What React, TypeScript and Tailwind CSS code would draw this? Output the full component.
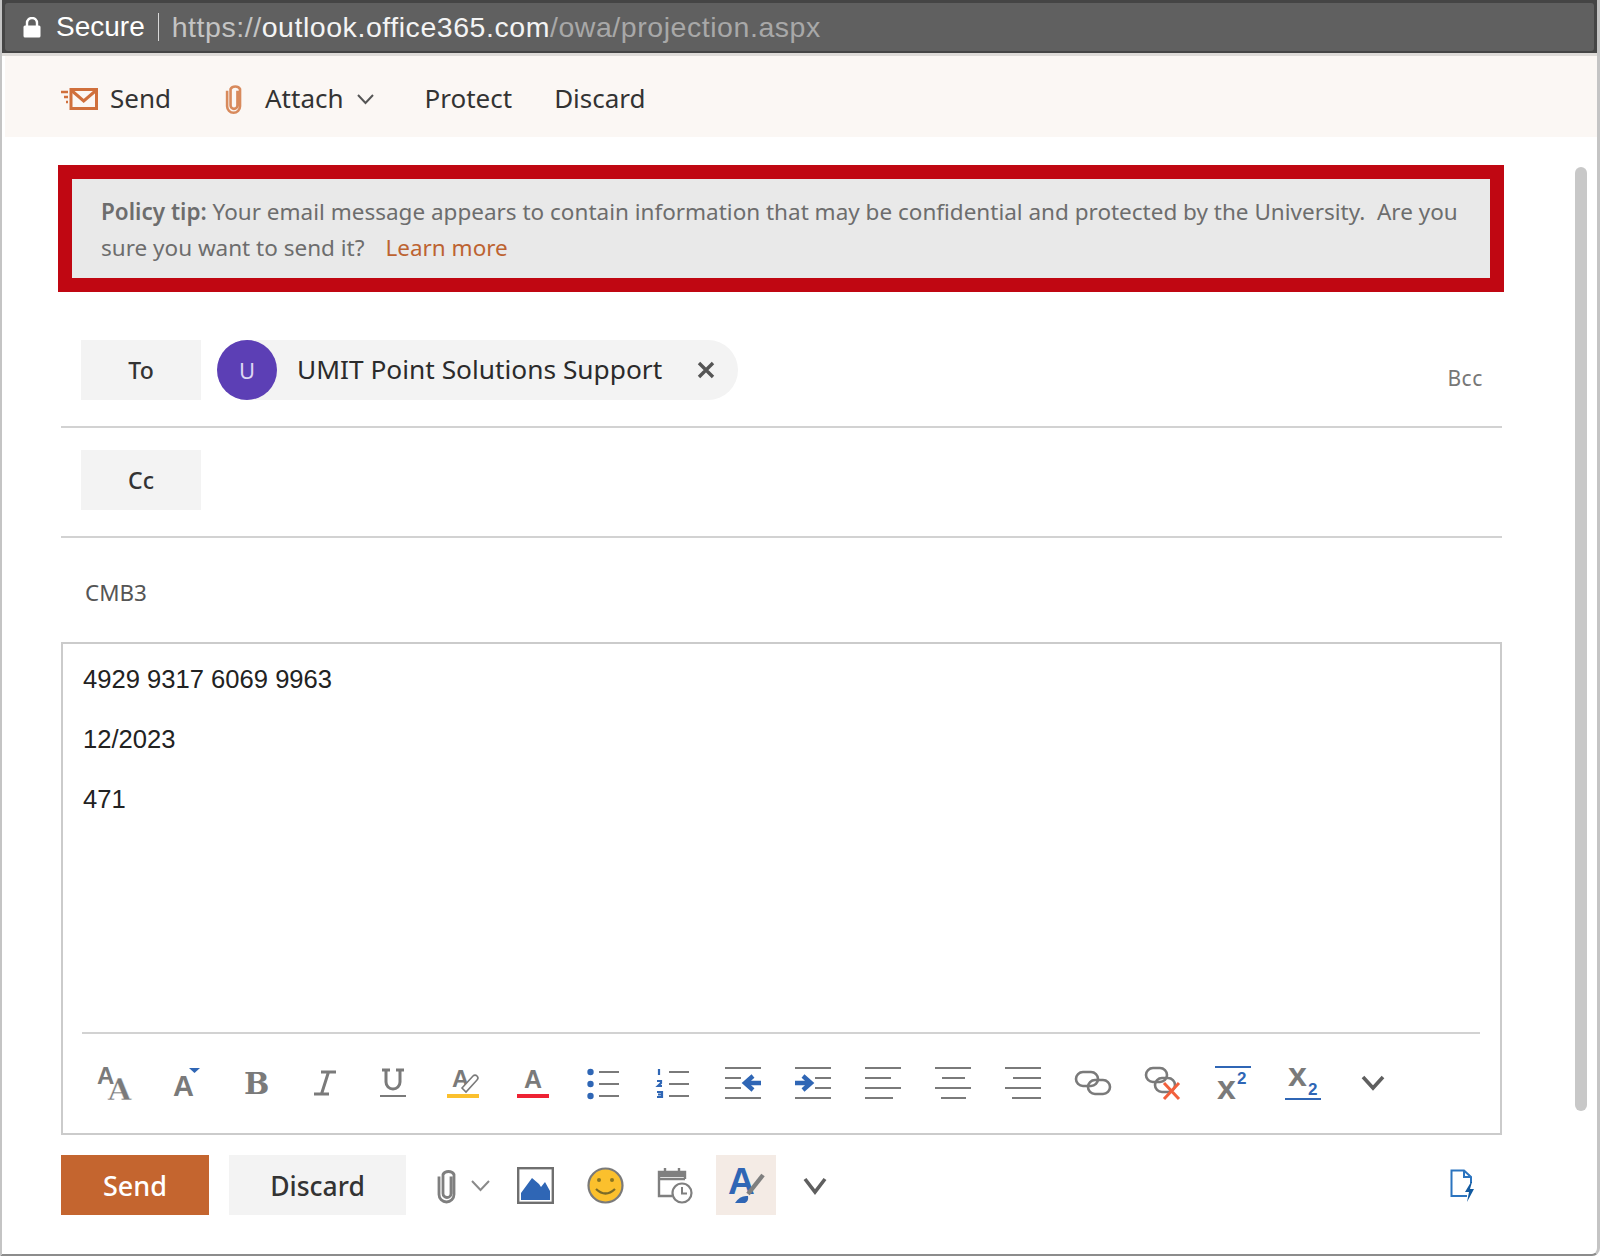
import type { ReactNode } from 'react';

const GRAY = '#7a7a7a';
const BLUE = '#2f66b5';
const SLAB = "'DejaVu Serif', serif";
const SANS = "'Liberation Sans', sans-serif";

function Svg({ w, h, children }: { w: number; h: number; children: ReactNode }) {
  return (
    <svg width={w} height={h} viewBox={`0 0 ${w} ${h}`} fill="none" className="block shrink-0 overflow-visible">
      {children}
    </svg>
  );
}

function Lines({ rows }: { rows: [number, number][] }) {
  const ys = [1, 11, 21, 31];
  return (
    <Svg w={36} h={32}>
      {rows.map(([x1, x2], i) => (
        <line key={i} x1={x1} x2={x2} y1={ys[i]} y2={ys[i]} stroke={GRAY} strokeWidth={2} />
      ))}
    </Svg>
  );
}

function Chevron({ w = 24, h = 15, color = '#5f5f5f', sw = 3.6 }: { w?: number; h?: number; color?: string; sw?: number }) {
  return (
    <Svg w={w} h={h}>
      <path d={`M2 2 L${w / 2} ${h - 2} L${w - 2} 2`} stroke={color} strokeWidth={sw} />
    </Svg>
  );
}

function Clip({ w, h, color, sw }: { w: number; h: number; color: string; sw: number }) {
  return (
    <svg width={w} height={h} viewBox="0 0 20 36" fill="none" className="block shrink-0">
      <path
        d="M14 9 V26 a4 4 0 0 1 -8 0 V7 a6 5 0 0 1 11 0 V27 a7.5 7.5 0 0 1 -15 0 V9"
        stroke={color}
        strokeWidth={sw}
      />
    </svg>
  );
}

const formatIcons: ReactNode[] = [
  <Svg w={38} h={36} key="size">
    <text x={-1} y={19} fontFamily={SANS} fontWeight={700} fontSize={24} fill={GRAY}>A</text>
    <text x={10} y={35} fontFamily={SLAB} fontWeight={700} fontSize={30} fill={GRAY} stroke="#fff" strokeWidth={0.4}>A</text>
  </Svg>,
  <Svg w={28} h={30} key="grow">
    <text x={0} y={28} fontFamily={SANS} fontWeight={700} fontSize={29} fill={GRAY}>A</text>
    <path d="M16 0 H27 L21.5 5 Z" fill={BLUE} />
  </Svg>,
  <Svg w={26} h={26} key="b">
    <text x={0} y={24} fontFamily={SLAB} fontWeight={700} fontSize={30} fill={GRAY}>B</text>
  </Svg>,
  <Svg w={24} h={26} key="i">
    <path d="M8 2 H23 M1 24 H16 M15.5 2 L8.5 24" stroke={GRAY} strokeWidth={3} />
  </Svg>,
  <Svg w={28} h={30} key="u">
    <path d="M3 2 H11 M17 2 H25 M7 2 V14 a7 7 0 0 0 14 0 V2" stroke={GRAY} strokeWidth={3} />
    <line x1={1} x2={27} y1={28} y2={28} stroke={GRAY} strokeWidth={2} />
  </Svg>,
  <Svg w={32} h={32} key="hl">
    <text x={5} y={20} fontFamily={SANS} fontWeight={700} fontSize={24} fill={GRAY}>A</text>
    <path d="M15 21 L26 9 a2.5 2.5 0 0 1 4 4 L19 25 Z" stroke={GRAY} strokeWidth={1.6} fill="#fff" />
    <rect x={0} y={27} width={32} height={4} fill="#fbc02d" />
  </Svg>,
  <Svg w={32} h={32} key="color">
    <text x={7} y={21} fontFamily={SANS} fontWeight={700} fontSize={25} fill={GRAY}>A</text>
    <rect x={0} y={27} width={32} height={4} fill="#ee2233" />
  </Svg>,
  <Svg w={32} h={30} key="bullets">
    {[4, 16, 28].map((y) => (
      <g key={y}>
        <circle cx={3.5} cy={y} r={3.2} fill={BLUE} />
        <line x1={12} x2={32} y1={y} y2={y} stroke={GRAY} strokeWidth={2} />
      </g>
    ))}
  </Svg>,
  <Svg w={33} h={30} key="numbers">
    <path d="M3 1 V7 M1 13 H5 V15 L2 18 H6 M1 24 H6 V29 H1 M2 26.5 H6" stroke={BLUE} strokeWidth={2.2} />
    {[4, 16, 28].map((y) => (
      <line key={y} x1={13} x2={33} y1={y} y2={y} stroke={GRAY} strokeWidth={2} />
    ))}
  </Svg>,
  <Svg w={36} h={32} key="outdent">
    <path d="M0 1 H36 M0 11 H16 M0 21 H16 M0 31 H36" stroke={GRAY} strokeWidth={2} />
    <path d="M36 16 H22 M28 9 L20 16 L28 23" stroke={BLUE} strokeWidth={4.4} />
  </Svg>,
  <Svg w={36} h={32} key="indent">
    <path d="M0 1 H36 M20 11 H36 M20 21 H36 M0 31 H36" stroke={GRAY} strokeWidth={2} />
    <path d="M0 16 H14 M8 9 L16 16 L8 23" stroke={BLUE} strokeWidth={4.4} />
  </Svg>,
  <Lines key="left" rows={[[0, 36], [0, 26], [0, 36], [0, 28]]} />,
  <Lines key="center" rows={[[0, 36], [7, 30], [0, 36], [6, 31]]} />,
  <Lines key="right" rows={[[0, 36], [8, 36], [0, 36], [7, 36]]} />,
  <Svg w={36} h={26} key="link">
    <rect x={1} y={2} width={22} height={14} rx={7} stroke={GRAY} strokeWidth={2.6} />
    <rect x={13} y={10} width={22} height={14} rx={7} stroke={GRAY} strokeWidth={2.6} />
  </Svg>,
  <Svg w={36} h={34} key="unlink">
    <rect x={1} y={2} width={21} height={14} rx={7} stroke={GRAY} strokeWidth={2.6} />
    <rect x={10} y={12} width={20} height={14} rx={7} stroke={GRAY} strokeWidth={2.6} />
    <path d="M19 17 L34 33 M34 17 L19 33" stroke="#f2603c" strokeWidth={3} />
  </Svg>,
  <Svg w={36} h={34} key="sup">
    <line x1={0} x2={36} y1={1} y2={1} stroke={BLUE} strokeWidth={2} />
    <text x={2} y={33} fontFamily={SANS} fontWeight={700} fontSize={34} fill={GRAY}>x</text>
    <text x={22} y={18} fontFamily={SANS} fontWeight={700} fontSize={17} fill={BLUE}>2</text>
  </Svg>,
  <Svg w={36} h={34} key="sub">
    <text x={3} y={20} fontFamily={SANS} fontWeight={700} fontSize={34} fill={GRAY}>x</text>
    <text x={23} y={29} fontFamily={SANS} fontWeight={700} fontSize={17} fill={BLUE}>2</text>
    <line x1={0} x2={36} y1={33} y2={33} stroke={BLUE} strokeWidth={2} />
  </Svg>,
  <Chevron key="more" />,
];

export default function App() {
  return (
    <div className="flex h-[1256px] w-[1600px] flex-col overflow-hidden rounded-br-lg border-r-[3px] border-b-2 border-l-2 border-r-[#c4c4c4] border-b-[#8c8c8c] border-l-[#c4c4c4] bg-white font-['Noto_Sans',sans-serif]">
      <div className="h-[53px] shrink-0 bg-[#454545] px-[3px] pt-[3px] pb-[2px]">
        <div className="flex h-full items-center rounded-[3px] bg-[#606060] pl-[18px] font-['Liberation_Sans',sans-serif]">
          <svg width="18" height="21" viewBox="0 0 18 21" className="mr-[15px] shrink-0">
            <path d="M4 9 V6 a5 5 0 0 1 10 0 V9" stroke="#fff" strokeWidth="2.4" fill="none" />
            <rect x="0.5" y="8.5" width="17" height="12" rx="1.5" fill="#fff" />
          </svg>
          <span className="text-[28px] text-white">Secure</span>
          <span className="mx-[13px] h-[28px] w-[1px] bg-[#d8d8d8]" />
          <span className="text-[28.5px] tracking-[0.55px] text-[#c4c4c4]">https://</span>
          <span className="text-[28.5px] tracking-[0.55px] text-[#f4f4f4]">outlook.office365.com</span>
          <span className="text-[28.5px] tracking-[0.55px] text-[#a8a8a8]">/owa/projection.aspx</span>
        </div>
      </div>
      <div className="h-[3px] shrink-0 bg-[#dedbd8]" />

      <div className="ml-[3px] flex h-[81px] shrink-0 items-center bg-[#fbf7f4] pl-[56px] pt-[4px] text-[26px] text-[#333]">
        <svg width="37" height="22" viewBox="0 0 37 22" fill="none" className="mr-[12px] shrink-0">
          <rect x="10" y="1.5" width="25.5" height="19" stroke="#d0703c" strokeWidth="3" />
          <path d="M10 2 L22.7 13 L35.5 2" stroke="#d0703c" strokeWidth="3" />
          <path d="M0 4 H7 M3 9 H7 M5 14 H7" stroke="#d0703c" strokeWidth="2.4" />
        </svg>
        <span>Send</span>
        <span className="ml-[53px] mr-[21px]">
          <Clip w={20} h={31} color="#d88a5c" sw={3} />
        </span>
        <span>Attach</span>
        <span className="ml-[12px] mr-[50px]">
          <Chevron w={19} h={12} color="#555" sw={2} />
        </span>
        <span>Protect</span>
        <span className="ml-[42px]">Discard</span>
      </div>

      <div className="flex min-h-0 flex-1">
        <div className="w-[1502px] shrink-0 pl-[56px] pt-[28px]">
          <div className="w-[1446px] border-[14px] border-[#c00712] bg-[#e9e9e9] pl-[29px] pr-[20px] pt-[15px] pb-[12px] text-[22.5px] leading-[36px] text-[#6d6d6d]">
            <span className="font-semibold">Policy tip:</span> Your email message appears to contain information that may be confidential and protected by the University.&nbsp; Are you sure you want to send it?
            <span className="ml-[21px] text-[#bd6331]">Learn more</span>
          </div>

          <div className="mt-[48px] ml-[3px] w-[1441px]">
            <div className="flex h-[88px] items-start border-b-2 border-[#d2d2d2] pl-[20px]">
              <div className="flex h-[60px] w-[120px] items-center justify-center bg-[#f3f3f3] text-[23px] font-medium text-[#333]">To</div>
              <div className="ml-[16px] flex h-[60px] w-[521px] items-center rounded-full bg-[#f3f3f3]">
                <div className="flex h-[60px] w-[60px] items-center justify-center rounded-full bg-[#5c3fb5] text-[22px] text-[#ddd6f3]">U</div>
                <span className="ml-[20px] text-[26.3px] text-[#2b2b2b]">UMIT Point Solutions Support</span>
                <svg width="18" height="18" viewBox="0 0 18 18" className="ml-[35px] shrink-0">
                  <path d="M2 2 L16 16 M16 2 L2 16" stroke="#555" strokeWidth="3.4" />
                </svg>
              </div>
              <span className="mt-[23px] ml-auto mr-[19px] text-[21px] tracking-[0.6px] text-[#777]">Bcc</span>
            </div>
            <div className="h-[110px] border-b-2 border-[#d2d2d2] pt-[22px] pl-[20px]">
              <div className="flex h-[60px] w-[120px] items-center justify-center bg-[#f3f3f3] text-[23px] font-medium text-[#333]">Cc</div>
            </div>
            <div className="flex h-[104px] items-center pl-[24px] pt-[6px] text-[22.4px] text-[#555]">CMB3</div>

            <div className="flex h-[493px] flex-col border-2 border-[#cbcbcb] pl-[19px] pr-[20px]">
              <div className="flex-1 pt-[20px] pl-[1px] font-['Liberation_Sans',sans-serif] text-[25.6px] text-[#222]">
                <div className="leading-[30px]">4929 9317 6069 9963</div>
                <div className="mt-[30px] leading-[30px]">12/2023</div>
                <div className="mt-[30px] leading-[30px]">471</div>
              </div>
              <div className="flex h-[101px] border-t-2 border-[#d2d2d2]">
                {formatIcons.map((icon, i) => (
                  <div
                    key={i}
                    className={`flex h-[99px] shrink-0 items-center justify-center pb-[2px] ${i === 3 ? 'w-[65.5px]' : 'w-[70px]'}`}
                  >
                    {icon}
                  </div>
                ))}
              </div>
            </div>

            <div className="mt-[20px] flex items-center">
              <div className="flex h-[60px] w-[148px] items-center justify-center bg-[#c4652f] pt-[3px] text-[27px] font-medium text-white">Send</div>
              <div className="ml-[20px] flex h-[60px] w-[177px] items-center justify-center bg-[#f3f3f3] pt-[3px] text-[26.5px] font-medium text-[#333]">Discard</div>
              <span className="ml-[31px]">
                <Clip w={20} h={37} color="#7f7f7f" sw={2.8} />
              </span>
              <span className="ml-[13px]">
                <Chevron w={21} h={13} color="#8a8a8a" sw={2} />
              </span>
              <span className="ml-[26px]">
                <Svg w={37} h={37}>
                  <rect x="1.2" y="1.2" width="34.6" height="34.6" stroke="#6f6f6f" strokeWidth="2.4" />
                  <path d="M4 33 V26 L15 11 L22 17 L24 20 L28 15 L33 24 V33 Z" fill={BLUE} />
                </Svg>
              </span>
              <span className="ml-[33px]">
                <Svg w={37} h={37}>
                  <circle cx="18.5" cy="18.5" r="17" fill="#fbc02d" stroke="#7a7a7a" strokeWidth="2.2" />
                  <circle cx="12" cy="13" r="2" fill="#8a7420" />
                  <circle cx="25" cy="13" r="2" fill="#8a7420" />
                  <path d="M9 22 Q18.5 31 28 22" stroke="#7a6a28" strokeWidth="2.2" />
                </Svg>
              </span>
              <span className="ml-[33px]">
                <Svg w={36} h={37}>
                  <path d="M15 29 H2 V5 H28 V12 M2 12 H28 M8 1 V7 M22 1 V7" stroke="#7f7f7f" strokeWidth="2.4" />
                  <rect x="3" y="4" width="24" height="6" fill="#7f7f7f" />
                  <circle cx="25" cy="26" r="9.5" stroke="#7f7f7f" strokeWidth="2.2" fill="#fff" />
                  <path d="M25 20 V26.5 H30" stroke="#7f7f7f" strokeWidth="2" />
                </Svg>
              </span>
              <div className="ml-[23px] flex h-[60px] w-[60px] items-center justify-center bg-[#f4ebe5]">
                <Svg w={37} h={38}>
                  <text x={0} y={28} fontFamily={SANS} fontWeight={700} fontSize={37} fill={BLUE}>A</text>
                  <path d="M20 28 L35 9" stroke="#7f7f7f" strokeWidth="4.4" />
                  <path d="M7 37 Q12 29 20 30 Q21 35 17 37 Z" fill={BLUE} />
                </Svg>
              </div>
              <span className="ml-[27px]">
                <Chevron w={24} h={17} />
              </span>
              <span className="ml-auto mr-[27px]">
                <Svg w={25} h={33}>
                  <path d="M17 27 H1.5 V1.5 H14 L21 8 V14 M14 1.5 V8 H21" stroke="#2b74bf" strokeWidth="2" />
                  <path d="M21 13 L15 23 H19 L17 33 L24 20 H20 L22 13 Z" fill="#125aa0" />
                </Svg>
              </span>
            </div>
          </div>
        </div>
        <div className="ml-[71px] mt-[30px] h-[944px] w-[12px] rounded-full bg-[#c8c8c8]" />
      </div>
    </div>
  );
}
